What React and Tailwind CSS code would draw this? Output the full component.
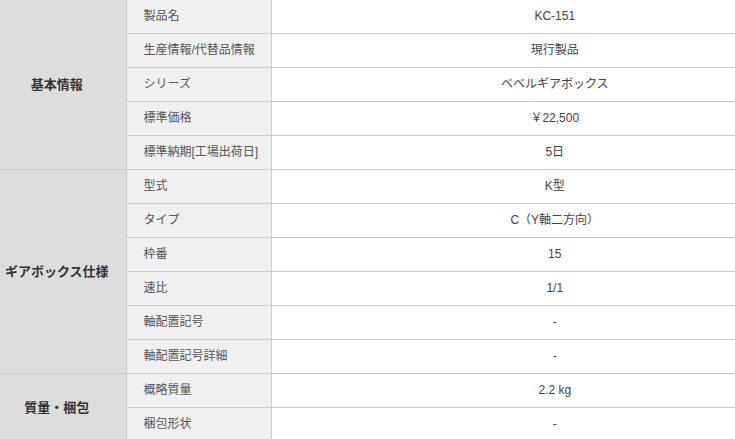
import React from 'react';

const groups = [
  {
    title: '基本情報',
    rows: [
      ['製品名', 'KC-151'],
      ['生産情報/代替品情報', '現行製品'],
      ['シリーズ', 'ベベルギアボックス'],
      ['標準価格', '￥22,500'],
      ['標準納期[工場出荷日]', '5日'],
    ],
  },
  {
    title: 'ギアボックス仕様',
    rows: [
      ['型式', 'K型'],
      ['タイプ', 'C（Y軸二方向）'],
      ['枠番', '15'],
      ['速比', '1/1'],
      ['軸配置記号', '-'],
      ['軸配置記号詳細', '-'],
    ],
  },
  {
    title: '質量・梱包',
    rows: [
      ['概略質量', '2.2 kg'],
      ['梱包形状', '-'],
    ],
  },
];

const App = () => {
  return (
    <div
      className="w-[735px] h-[439px] overflow-hidden bg-white"
      style={{ fontFamily: '"Liberation Sans", "Noto Sans CJK JP", sans-serif' }}
    >
      <table className="w-[838px] -mt-px border-collapse table-fixed border-t border-[#cccccc]">
        <colgroup>
          <col className="w-[126px]" />
          <col className="w-[145px]" />
          <col />
        </colgroup>
        <tbody>
          {groups.map((group) =>
            group.rows.map((row, i) => (
              <tr key={group.title + row[0]} className="h-[34px]">
                {i === 0 && (
                  <th
                    rowSpan={group.rows.length}
                    className="bg-[#dddddd] border-b border-r border-[#cccccc] pr-3 text-center text-[13px] font-bold text-[#333333] align-middle"
                  >
                    {group.title}
                  </th>
                )}
                <td className="bg-[#f0f0f0] border-b border-r border-[#cccccc] pl-[17px] text-left text-[12px] text-[#555555] whitespace-nowrap align-middle pb-[2px]">
                  {row[0]}
                </td>
                <td className="border-b border-[#cccccc] text-center text-[12px] text-[#444444] align-middle pb-[2px]">
                  {row[1]}
                </td>
              </tr>
            ))
          )}
        </tbody>
      </table>
    </div>
  );
};

export default App;
